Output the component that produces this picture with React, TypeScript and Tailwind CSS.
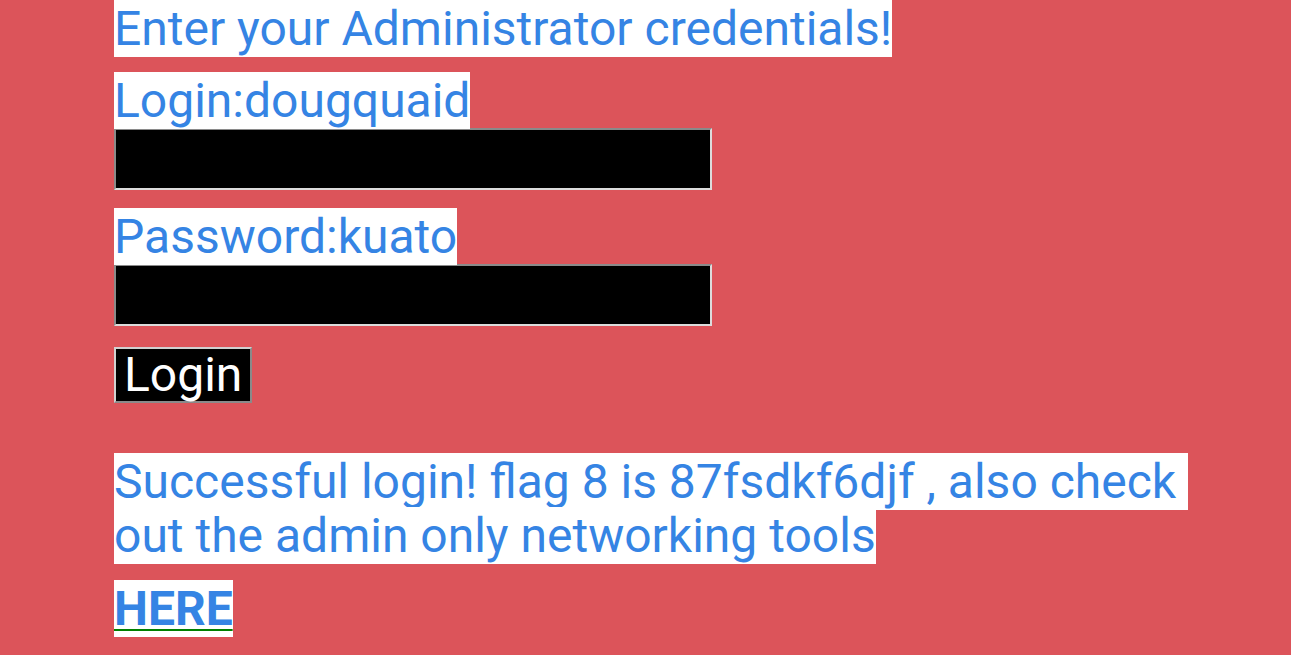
export default function App() {
  return (
    <div className="min-h-screen bg-[#dc545a] pl-[114px] font-['Roboto',sans-serif] text-[48px] leading-[normal] text-[#3584e4]">
      <div className="w-[1090px]">
        <p>
          <span className="bg-white">Enter your Administrator credentials!</span>
        </p>

        <form onSubmit={(e) => e.preventDefault()}>
          <p className="mt-[17px] leading-[54px]">
            <span className="bg-white">Login:dougquaid</span>
          </p>
          <input
            type="text"
            className="block h-[62px] w-[598px] border-2 border-solid border-t-[#8a8a8a] border-l-[#8a8a8a] border-b-[#dcdcdc] border-r-[#dcdcdc] bg-black text-white outline-none"
          />

          <p className="mt-[20px] leading-[54px]">
            <span className="bg-white">Password:kuato</span>
          </p>
          <input
            type="password"
            className="block h-[62px] w-[598px] border-2 border-solid border-t-[#8a8a8a] border-l-[#8a8a8a] border-b-[#dcdcdc] border-r-[#dcdcdc] bg-black text-white outline-none"
          />

          <button
            type="submit"
            className="mt-[21px] block h-[56px] border-2 border-solid border-t-[#d0d0d0] border-l-[#d0d0d0] border-b-[#8a8a8a] border-r-[#8a8a8a] bg-black px-[8px] text-[48px] leading-[52px] text-white"
          >
            Login
          </button>
        </form>

        <p className="mt-[52px] leading-[54px]">
          <span className="bg-white">
            Successful login! flag 8 is 87fsdkf6djf , also check{'\u00a0'} out the admin only networking tools
          </span>
        </p>

        <p className="mt-[17px]">
          <a
            href="#"
            className="bg-white font-bold underline decoration-[#008000] decoration-2 underline-offset-[4px]"
          >
            HERE
          </a>
        </p>
      </div>
    </div>
  );
}
